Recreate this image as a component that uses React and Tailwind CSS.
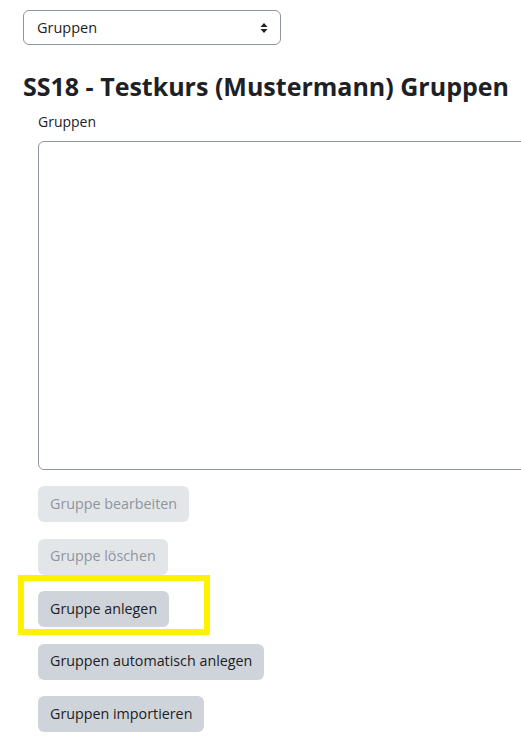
function Knopf({ children, disabled }) {
  return (
    <button
      type="button"
      disabled={disabled}
      className={
        disabled
          ? 'h-9 px-3 rounded-md bg-[#e3e6e9] text-[#8f959e] text-[14.3px] leading-none'
          : 'h-9 px-3 rounded-md bg-[#ced4da] text-[#1d2125] text-[14.3px] leading-none'
      }
    >
      {children}
    </button>
  );
}

function App() {
  return (
    <div className="w-[521px] h-[753px] overflow-hidden bg-white font-['Open_Sans',sans-serif] text-[#1d2125]">
      <div className="pl-[23px] pt-[10px]">
        <div className="w-[258px] h-[35px] border border-[#8f959e] rounded-md flex items-center justify-between pl-[13px] pr-[12px] text-[14.5px]">
          <span>Gruppen</span>
          <svg width="8" height="12" viewBox="0 0 8 12" className="text-[#1d2125]">
            <path d="M4 1 L7.5 5 H0.5 Z" fill="currentColor" />
            <path d="M4 11 L7.5 7 H0.5 Z" fill="currentColor" />
          </svg>
        </div>

        <h2 className="mt-[26px] text-[25px] font-bold leading-[30px] whitespace-nowrap">
          SS18 - Testkurs (Mustermann) Gruppen
        </h2>
      </div>

      <div className="pl-[38px]">
        <div className="mt-[11px] text-[14px] leading-[20px]">Gruppen</div>
        <div className="mt-[9px] w-[520px] h-[329px] border border-[#8f959e] rounded-l-md" />

        <div className="mt-[16px] flex flex-col items-start gap-[16.5px]">
          <Knopf disabled>Gruppe bearbeiten</Knopf>
          <Knopf disabled>Gruppe löschen</Knopf>
          <div className="relative">
            <Knopf>Gruppe anlegen</Knopf>
            <div className="absolute left-[-20px] top-[-16px] w-[192px] h-[60px] border-[6px] border-[#fff200]" />
          </div>
          <Knopf>Gruppen automatisch anlegen</Knopf>
          <Knopf>Gruppen importieren</Knopf>
        </div>
      </div>
    </div>
  );
}

export default App;
